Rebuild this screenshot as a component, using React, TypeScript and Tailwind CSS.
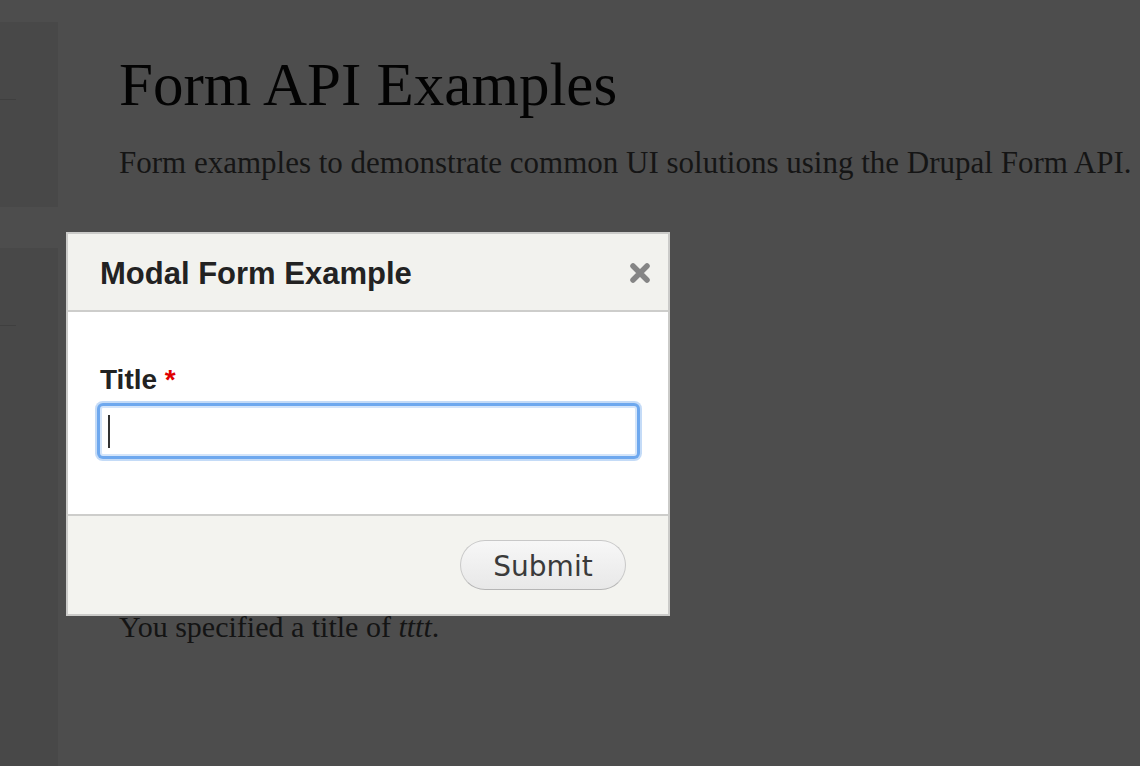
import React from 'react';

const serif = { fontFamily: '"Liberation Serif", "Times New Roman", serif' };

function Sidebar() {
  return (
    <aside className="w-[58px] shrink-0 flex flex-col pt-[22px]">
      <div className="h-[185px] bg-[#484848] pt-[77px]">
        <div className="w-[16px] h-px bg-[#3f3f3f]" />
      </div>
      <div className="flex-1 mt-[41px] bg-[#484848] pt-[77px]">
        <div className="w-[16px] h-px bg-[#3f3f3f]" />
      </div>
    </aside>
  );
}

function CloseIcon() {
  return (
    <svg width="22" height="22" viewBox="0 0 22 22" className="text-[#858585]">
      <path d="M4 4 L18 18 M18 4 L4 18" stroke="currentColor" strokeWidth="5.5" strokeLinecap="round" />
    </svg>
  );
}

function ModalForm() {
  return (
    <div
      className="absolute left-[66px] top-[232px] w-[604px] h-[384px] border-2 border-[#cbcbc9] flex flex-col"
      style={{ fontFamily: '"Liberation Sans", Arial, sans-serif' }}
    >
      <div className="h-[78px] shrink-0 bg-[#f2f2ee] border-b-2 border-[#cdcdcb] flex items-center justify-between pl-[32px] pr-[17px]">
        <h2 className="text-[31px] leading-[36px] font-bold text-[#222] mt-[4px]">Modal Form Example</h2>
        <button className="mt-[2px]" aria-label="Close">
          <CloseIcon />
        </button>
      </div>

      <div className="h-[204px] shrink-0 bg-white border-b-2 border-[#cdcdcb] pt-[52px] pl-[32px] pr-[30px]">
        <label className="block text-[28px] leading-[32px] font-bold text-[#222]">
          Title <span className="text-[#e00000]">*</span>
        </label>
        <div className="mt-[10px] h-[50px] w-[537px] rounded-[3px] border-2 border-[#d4e5fa] bg-white flex items-center pl-[6px] shadow-[0_0_0_3px_#6ea8ee,0_0_0_5px_#c4dbf7]">
          <span className="w-[2px] h-[33px] bg-[#333]" />
        </div>
      </div>

      <div className="flex-1 bg-[#f3f3ef] flex justify-end items-start pt-[24px] pr-[42px]">
        <button
          className="h-[50px] w-[166px] rounded-full border border-[#c8c8c8] border-b-[#b5b5b5] bg-gradient-to-b from-[#f7f7f7] to-[#e8e8e8] text-[28px] leading-[48px] text-[#3a3a3a] pt-[2px]"
          style={{ fontFamily: '"DejaVu Sans", Verdana, sans-serif' }}
        >
          Submit
        </button>
      </div>
    </div>
  );
}

export default function App() {
  return (
    <div className="relative w-[1140px] h-[766px] overflow-hidden bg-[#4d4d4d] flex">
      <Sidebar />
      <main className="flex-1 pl-[61px] pt-[55px]" style={serif}>
        <h1 className="text-[61px] leading-[60px] text-[#030303] whitespace-nowrap">Form API Examples</h1>
        <p className="mt-[28px] text-[31px] leading-[40px] text-[#151515] whitespace-nowrap">
          Form examples to demonstrate common UI solutions using the Drupal Form API.
        </p>
        <p className="mt-[424px] text-[30px] leading-[40px] text-[#141414] whitespace-nowrap">
          You specified a title of <em>tttt</em>.
        </p>
      </main>
      <ModalForm />
    </div>
  );
}
